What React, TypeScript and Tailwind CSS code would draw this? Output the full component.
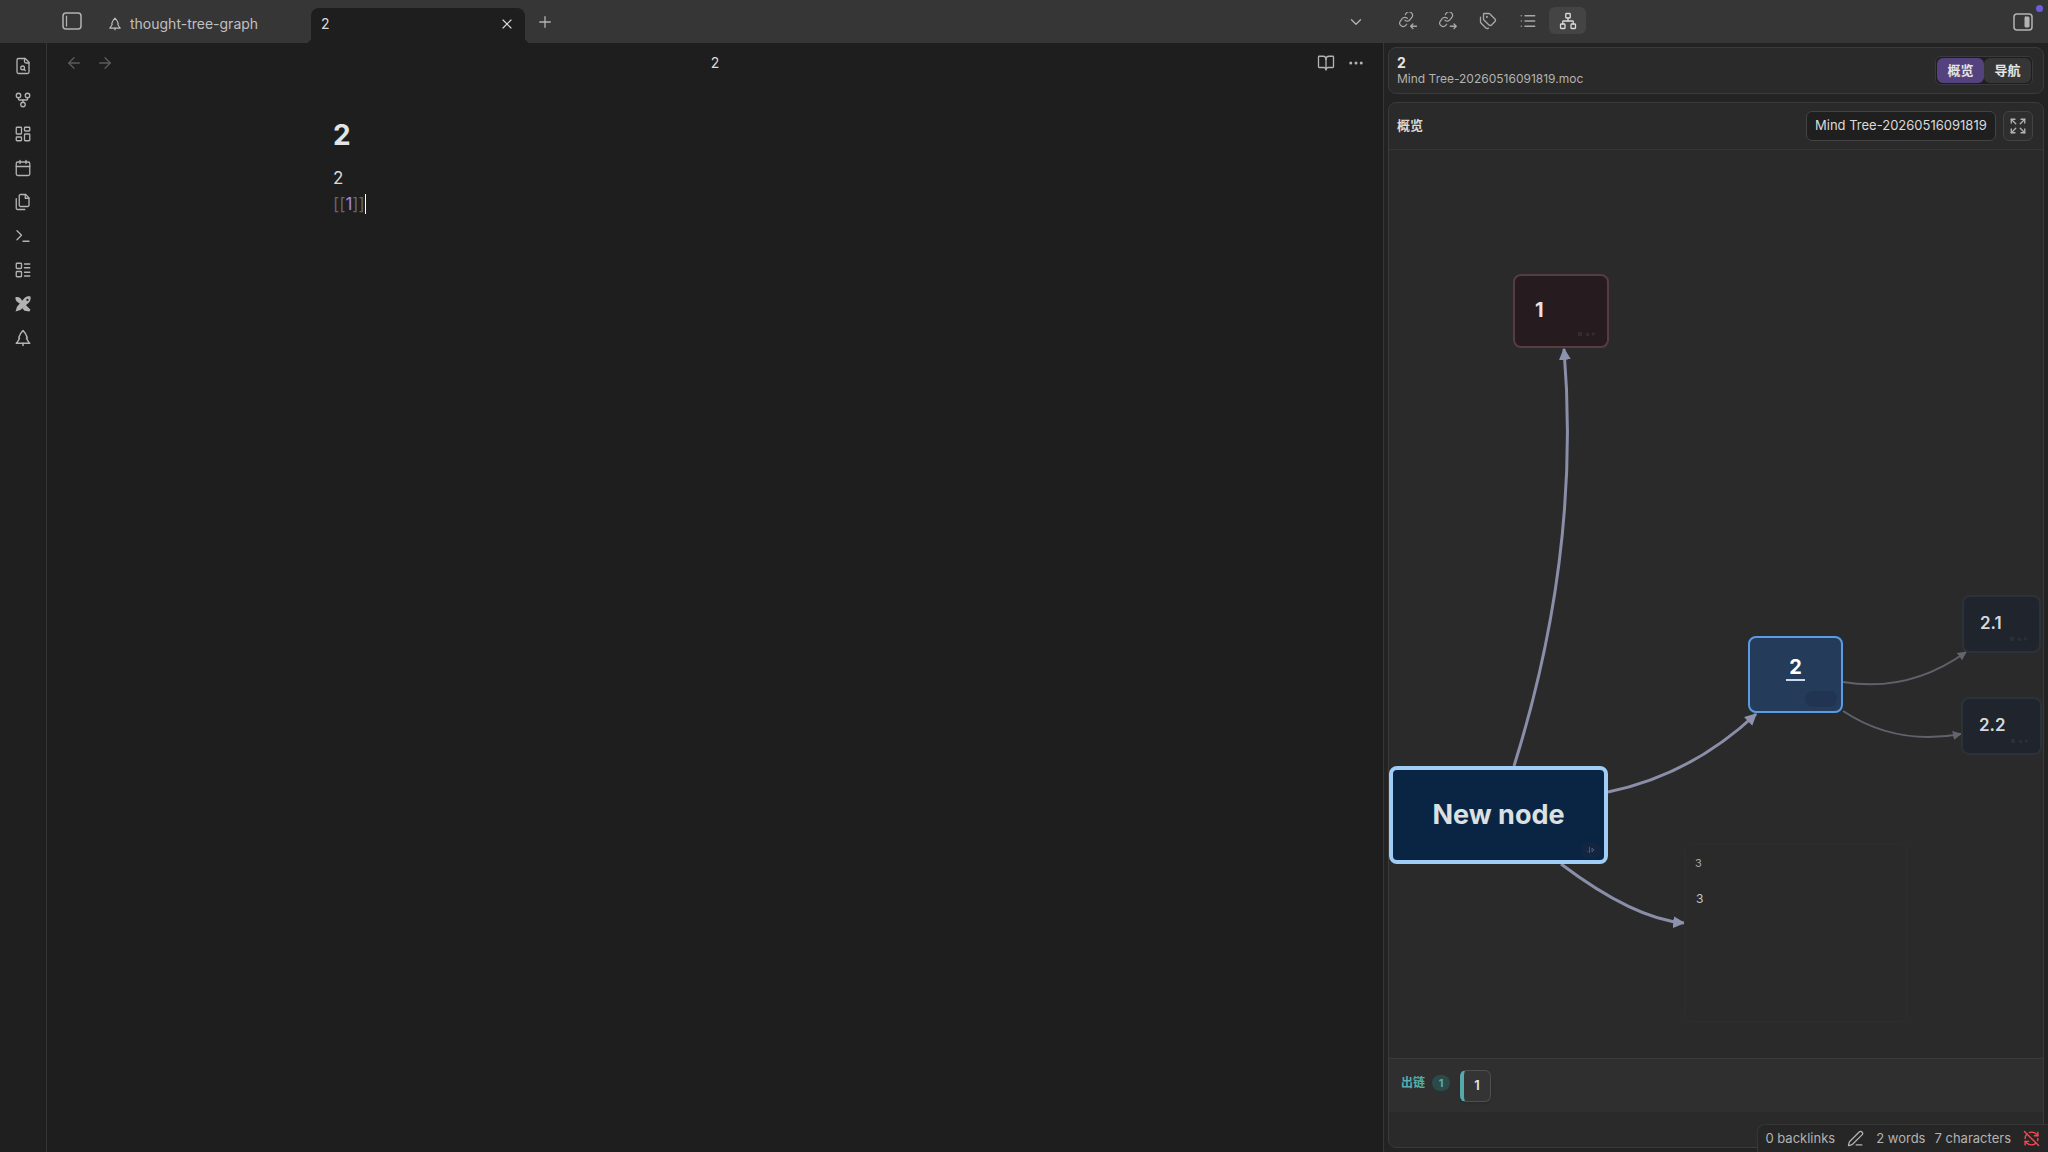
import type { ReactNode } from 'react';
import {
    ArrowLeft,
    ArrowRight,
    BookOpen,
    Calendar,
    ChevronDown,
    Ellipsis,
    Expand,
    GitFork,
    LayoutDashboard,
    LayoutList,
    List,
    Network,
    PenLine,
    Plus,
    RefreshCwOff,
    Tags,
    Terminal,
    X,
} from 'lucide-react';

const MAP_NAME = 'Mind Tree-20260516091819';

export default function App() {
    return (
        <div className="relative flex h-screen flex-col overflow-hidden bg-[#1e1e1e] font-['Inter','Noto_Sans_CJK_SC',sans-serif] text-[#dadada]">
            <TopBar />

            <div className="flex min-h-0 flex-1">
                <Ribbon />
                <Editor />
                <MindPanel />
            </div>

            <StatusBar />
        </div>
    );
}

/* ─── Top bar ─── */

function TopBar() {
    return (
        <header className="flex h-[43px] shrink-0 bg-[#363636] text-[#b3b3b3]">
            <div className="flex min-w-0 flex-1 items-end">
                <div className="flex h-full w-[98px] items-center justify-end pr-4 pb-px">
                    <button aria-label="Toggle left sidebar">
                        <SidebarIcon side="left" />
                    </button>
                </div>

                <a href="#thought-tree-graph" className="flex h-[35px] w-[213px] items-center gap-2 pr-4 pl-[10px] pb-1 text-sm text-[#c0c0c0]">
                    <TreeIcon size={14} />
                    thought-tree-graph
                </a>

                <div className="relative flex h-[35px] w-[214px] items-center justify-between rounded-t-lg bg-[#1e1e1e] pr-[10px] pb-1 pl-[10px] text-sm text-[#dadada]">
                    <span className="absolute bottom-0 -left-[6px] size-[6px] rounded-br-md shadow-[3px_3px_0_0_#1e1e1e]" />
                    <span className="absolute -right-[6px] bottom-0 size-[6px] rounded-bl-md shadow-[-3px_3px_0_0_#1e1e1e]" />
                    <span>2</span>
                    <button aria-label="Close tab">
                        <X size={16} strokeWidth={1.75} />
                    </button>
                </div>

                <button aria-label="New tab" className="ml-[11px] self-center">
                    <Plus size={18} strokeWidth={1.75} />
                </button>
                <button aria-label="Tab list" className="mr-[18px] ml-auto self-center">
                    <ChevronDown size={18} strokeWidth={1.75} />
                </button>
            </div>

            <div className="flex w-[665px] items-center pr-[15px] pl-[6px]">
                <nav className="flex gap-[3px] pb-[2px]">
                    <PaneTab label="Backlinks"><LinkArrowIcon direction="in" /></PaneTab>
                    <PaneTab label="Outgoing links"><LinkArrowIcon direction="out" /></PaneTab>
                    <PaneTab label="Tags"><Tags size={18} strokeWidth={1.75} /></PaneTab>
                    <PaneTab label="Outline"><List size={18} strokeWidth={1.75} /></PaneTab>
                    <PaneTab label="Mind tree" active><Network size={18} strokeWidth={1.75} /></PaneTab>
                </nav>
                <button aria-label="Toggle right sidebar" className="relative ml-auto">
                    <SidebarIcon side="right" />
                    <span className="absolute -top-[8px] -right-[10px] size-[7px] rounded-full bg-[#6c5ce0]" />
                </button>
            </div>
        </header>
    );
}

function PaneTab({ label, active, children }: { label: string; active?: boolean; children: ReactNode }) {
    return (
        <button
            aria-label={label}
            className={`flex h-[27px] w-[37px] items-center justify-center rounded-md ${active ? 'bg-[#444444] text-[#dadada]' : 'text-[#a8a8a8]'}`}
        >
            {children}
        </button>
    );
}

/* ─── Left ribbon ─── */

function Ribbon() {
    const items = [
        { label: 'Quick switcher', icon: <FileSearchIcon /> },
        { label: 'Graph view', icon: <GitFork size={18} strokeWidth={1.75} /> },
        { label: 'New canvas', icon: <LayoutDashboard size={18} strokeWidth={1.75} /> },
        { label: 'Daily note', icon: <Calendar size={18} strokeWidth={1.75} /> },
        { label: 'Insert template', icon: <FilesIcon /> },
        { label: 'Command palette', icon: <Terminal size={18} strokeWidth={1.75} /> },
        { label: 'New base', icon: <LayoutList size={18} strokeWidth={1.75} /> },
        { label: 'Excalidraw', icon: <CrossedPensIcon /> },
        { label: 'Thought tree', icon: <TreeIcon size={18} /> },
    ];

    return (
        <nav className="flex w-[47px] shrink-0 flex-col items-center gap-[7px] border-r border-[#363636] bg-[#1f1f1f] pt-[9px] text-[#b3b3b3]">
            {items.map((item) => (
                <button key={item.label} aria-label={item.label} className="flex h-[27px] w-8 items-center justify-center">
                    {item.icon}
                </button>
            ))}
        </nav>
    );
}

/* ─── Note editor ─── */

function Editor() {
    return (
        <main className="flex min-w-0 flex-1 flex-col">
            <div className="flex h-10 items-center justify-between px-[18px] text-[#b3b3b3]">
                <div className="flex w-16 gap-[13px] text-[#5c5c5c]">
                    <button aria-label="Back"><ArrowLeft size={18} strokeWidth={1.75} /></button>
                    <button aria-label="Forward"><ArrowRight size={18} strokeWidth={1.75} /></button>
                </div>
                <span className="text-sm text-[#dadada]">2</span>
                <div className="flex w-16 justify-end gap-3">
                    <button aria-label="Reading view"><BookOpen size={18} strokeWidth={1.75} /></button>
                    <button aria-label="More options"><Ellipsis size={18} strokeWidth={2} /></button>
                </div>
            </div>

            <article className="mx-auto w-full max-w-[764px] pt-8">
                <h1 className="text-[28px] leading-10 font-bold text-[#e4e4e4]">2</h1>
                <div className="mt-[10px] text-[17px] leading-[26px]">
                    <p>2</p>
                    <p className="flex items-center text-[#666666]">
                        [[<a href="#1" className="text-[#a08ae8]">1</a>]]
                        <span className="h-5 w-px bg-white" />
                    </p>
                </div>
            </article>
        </main>
    );
}

/* ─── Mind tree panel ─── */

function MindPanel() {
    return (
        <aside className="flex w-[665px] shrink-0 flex-col gap-2 border-l border-[#363636] bg-[#232323] px-1 pt-1 pb-1">
            <section className="flex h-[47px] shrink-0 items-center justify-between rounded-lg border border-[#3a3a3a] bg-[#2a2a2a] pr-[10px] pl-2">
                <div>
                    <h2 className="text-sm leading-4 font-bold text-[#e4e4e4]">2</h2>
                    <p className="text-xs leading-4 text-[#b3b3b3]">{MAP_NAME}.moc</p>
                </div>
                <div className="flex rounded-md border border-[#3a3a3a] bg-[#1e1e1e] p-px text-[13px] font-bold text-[#e4e4e4]">
                    <button className="h-[25px] w-[47px] rounded-md bg-[#54427f]">概览</button>
                    <button className="h-[25px] w-[47px] rounded-md bg-[#363636]">导航</button>
                </div>
            </section>

            <section className="flex min-h-0 flex-1 flex-col overflow-hidden rounded-lg border border-[#3a3a3a] bg-[#2a2a2a]">
                <div className="flex h-[47px] shrink-0 items-center justify-between border-b border-[#363636] pr-[10px] pl-2">
                    <h3 className="text-[13px] font-bold text-[#dadada]">概览</h3>
                    <div className="flex gap-[7px]">
                        <select
                            aria-label="Mind map"
                            className="h-[30px] w-[190px] appearance-none rounded-md border border-[#434343] bg-[#1f1f1f] px-2 text-[13px] text-[#dadada]"
                        >
                            <option>{MAP_NAME}</option>
                        </select>
                        <button
                            aria-label="Fit to view"
                            className="flex h-[30px] w-[30px] items-center justify-center rounded-md border border-[#434343] bg-[#2e2e2e] text-[#b3b3b3]"
                        >
                            <Expand size={18} strokeWidth={1.75} />
                        </button>
                    </div>
                </div>

                <MindCanvas />

                <div className="flex h-[54px] shrink-0 items-start border-t border-[#3a3a3a] bg-[#2f2f2f] pt-[11px] pl-3">
                    <div className="flex h-[26px] items-center gap-[7px] text-xs font-bold text-[#55aeb0]">
                        出链
                        <span className="flex h-4 w-[18px] items-center justify-center rounded-full bg-[#2b4a4a] text-[11px]">1</span>
                    </div>
                    <a
                        href="#1"
                        className="ml-[10px] flex h-8 w-[31px] items-center justify-center rounded-md border border-l-4 border-[#4f4f4f] border-l-[#55a9ab] bg-[#343434] text-[13px] font-semibold text-[#e4e4e4] shadow"
                    >
                        1
                    </a>
                </div>
                <div className="h-[35px] shrink-0" />
            </section>
        </aside>
    );
}

function MindCanvas() {
    return (
        <div className="relative min-h-0 flex-1 overflow-hidden">
            <svg className="absolute inset-0 size-full" fill="none">
                <defs>
                    <marker id="arrow" viewBox="0 0 10 10" refX="9" refY="5" markerWidth="12" markerHeight="12" markerUnits="userSpaceOnUse" orient="auto">
                        <path d="M0 0 10 5 0 10z" fill="#8d92ae" />
                    </marker>
                    <marker id="arrow-dim" viewBox="0 0 10 10" refX="9" refY="5" markerWidth="9" markerHeight="9" markerUnits="userSpaceOnUse" orient="auto">
                        <path d="M0 0 10 5 0 10z" fill="#63656e" />
                    </marker>
                </defs>
                <g stroke="#8a8ea8" strokeWidth="3">
                    <path d="M125 616Q192 403 175 199" markerEnd="url(#arrow)" />
                    <path d="M219 642Q302 625 367 564" markerEnd="url(#arrow)" />
                    <path d="M172 714Q245 769 295 773" markerEnd="url(#arrow)" />
                </g>
                <g stroke="#60626c" strokeWidth="2">
                    <path d="M454 532Q520 543 577 502" markerEnd="url(#arrow-dim)" />
                    <path d="M454 561Q507 596 572 584" markerEnd="url(#arrow-dim)" />
                </g>
            </svg>

            <div className="absolute top-[124px] left-[124px] flex h-[74px] w-[96px] items-center rounded-lg border-2 border-[#573c44] bg-[#261b1e] pl-5 text-xl font-bold text-[#eadfe3]">
                <span className="pb-[2px]">1</span>
                <NodeBadge className="text-[#382a2e]" />
            </div>

            <div className="absolute top-[486px] left-[359px] flex h-[77px] w-[95px] justify-center rounded-lg border-2 border-[#5b9be6] bg-[#243b5a] pt-[15px] text-xl font-bold text-white">
                <span className="h-7 border-b-2 border-[#c9daf0] px-[3px] leading-7">2</span>
                <span className="absolute right-1 bottom-1 h-4 w-8 rounded-full bg-[#213552]" />
            </div>

            <div className="absolute top-[445px] left-[573px] flex h-[58px] w-[79px] items-center rounded-lg border-2 border-[#2c323a] bg-[#1f242d] pl-4 text-[17px] font-semibold text-[#d5d9df]">
                2.1
                <NodeBadge className="text-[#2a303a]" />
            </div>

            <div className="absolute top-[547px] left-[572px] flex h-[58px] w-[81px] items-center rounded-lg border-2 border-[#2c323a] bg-[#1f242d] pl-4 text-[17px] font-semibold text-[#d5d9df]">
                2.2
                <NodeBadge className="text-[#2a303a]" />
            </div>

            <div className="absolute top-[616px] left-0 flex h-[98px] w-[219px] items-center justify-center rounded-lg border-4 border-[#9fcdf5] bg-[#0a2544] text-[27px] font-bold text-[#dce0e0]">
                New node
                <span className="absolute right-[3px] bottom-[2px] flex h-4 w-[20px] items-center justify-center rounded-full bg-[#132641] text-[#4a5a70]">
                    <svg width="8" height="8" viewBox="0 0 8 8" fill="none" stroke="currentColor">
                        <path d="M0.500 5.500h1M2.500 1v6M5 2v4l2-2z" />
                    </svg>
                </span>
            </div>

            <div className="absolute top-[693px] left-[295px] flex h-[180px] w-[224px] flex-col rounded-lg border-2 border-[#2c2c2f] pt-[10px] pl-[9px] text-[#a8a8a8]">
                <span className="text-[11px] leading-4">3</span>
                <span className="mt-5 pl-px text-xs leading-4 text-[#c4c4c4]">3</span>
            </div>
        </div>
    );
}

function NodeBadge({ className }: { className: string }) {
    return (
        <svg className={`absolute right-2 bottom-2 ${className}`} width="22" height="8" viewBox="0 0 22 8" fill="currentColor">
            <path d="M1 2h4v4H1zM9 3h3v3H9zM15 2l4 2-4 2z" />
        </svg>
    );
}

/* ─── Status bar ─── */

function StatusBar() {
    return (
        <footer className="absolute right-0 bottom-0 flex h-7 items-center rounded-tl-lg border-t border-l border-[#363636] bg-[#262626] pr-2 pl-[7px] text-[13px] text-[#b3b3b3]">
            <span>0 backlinks</span>
            <button aria-label="Edit mode" className="ml-3">
                <PenLine size={17} strokeWidth={1.75} />
            </button>
            <span className="ml-3">2 words</span>
            <span className="ml-[9px]">7 characters</span>
            <button aria-label="Sync disabled" className="ml-3 text-[#f04a50]">
                <RefreshCwOff size={17} strokeWidth={2} />
            </button>
        </footer>
    );
}

/* ─── Icons ─── */

function Svg({ size = 18, strokeWidth = 1.75, children }: { size?: number; strokeWidth?: number; children: ReactNode }) {
    return (
        <svg width={size} height={size} viewBox="0 0 24 24" fill="none" stroke="currentColor" strokeWidth={strokeWidth} strokeLinecap="round" strokeLinejoin="round">
            {children}
        </svg>
    );
}

function SidebarIcon({ side }: { side: 'left' | 'right' }) {
    return (
        <svg width="20" height="18" viewBox="0 0 20 18" fill="none" stroke="currentColor" strokeWidth="1.5" strokeLinecap="round">
            <rect x="1" y="1" width="18" height="16" rx="3" />
            {side === 'left' ? <path d="M4.500 4v10" strokeWidth="1.250" /> : <rect x="12" y="4" width="4" height="10" rx="0.500" fill="currentColor" strokeWidth="1" />}
        </svg>
    );
}

function TreeIcon({ size }: { size: number }) {
    return (
        <Svg size={size} strokeWidth={2}>
            <path d="M12 2C9.500 4.500 7.500 7.500 6.500 11c-.3.800.2 1.200.8 1.200C6.500 14.500 5 17 3 19h18c-2-2-3.500-4.500-4.300-6.800.6 0 1.100-.4.8-1.200C16.500 7.500 14.500 4.500 12 2Z" />
            <path d="M12 19v3" />
        </Svg>
    );
}

function FileSearchIcon() {
    return (
        <Svg>
            <path d="M15 2H6a2 2 0 0 0-2 2v16a2 2 0 0 0 2 2h12a2 2 0 0 0 2-2V7Z" />
            <path d="M14 2v4a2 2 0 0 0 2 2h4" />
            <circle cx="11.500" cy="14.500" r="2.500" />
            <path d="M13.300 16.300 15 18" />
        </Svg>
    );
}

function FilesIcon() {
    return (
        <Svg>
            <path d="M15.500 2H8.600c-.4 0-.8.2-1.100.5-.3.3-.5.7-.5 1.100v12.800c0 .4.2.8.5 1.100.3.3.7.5 1.100.5h9.800c.4 0 .8-.2 1.100-.5.3-.3.5-.7.5-1.100V6.500L15.500 2z" />
            <path d="M3 7.600v12.800c0 .4.2.8.5 1.100.3.3.7.5 1.100.5h9.800" />
            <path d="M15 2v5h5" />
        </Svg>
    );
}

function LinkArrowIcon({ direction }: { direction: 'in' | 'out' }) {
    return (
        <Svg>
            <g transform="rotate(-8 10 10) translate(-1.500 -1.500) scale(.92)">
                <path d="M10 13a5 5 0 0 0 7.540.540l3-3a5 5 0 0 0-7.070-7.070l-1.720 1.710" />
                <path d="M14 11a5 5 0 0 0-7.540-.540l-3 3a5 5 0 0 0 7.070 7.070l1.200-1.200" />
            </g>
            {direction === 'in' ? <path d="M23.500 19h-8M18.500 16l-3 3 3 3" /> : <path d="M15 19h8M20 16l3 3-3 3" />}
        </Svg>
    );
}

function CrossedPensIcon() {
    return (
        <svg width="18" height="18" viewBox="0 0 24 24" fill="currentColor">
            <path d="M2 3c3-1 6 0 7.500 2.500L12 8.500 8.500 12 5 9.500C2.500 8 1.500 5.500 2 3Z" />
            <path d="m15.500 13 6.500 6.500-1.500 2.500L14 21l-3-3.500Z" />
            <path fillRule="evenodd" d="M22 2c.5 3 0 6-2 8L8.500 20 2 22l2-6.500L14 4c2-2 5-2.500 8-2Zm-4 3a1.500 1.500 0 1 0 0 3 1.500 1.500 0 0 0 0-3Z" />
        </svg>
    );
}
